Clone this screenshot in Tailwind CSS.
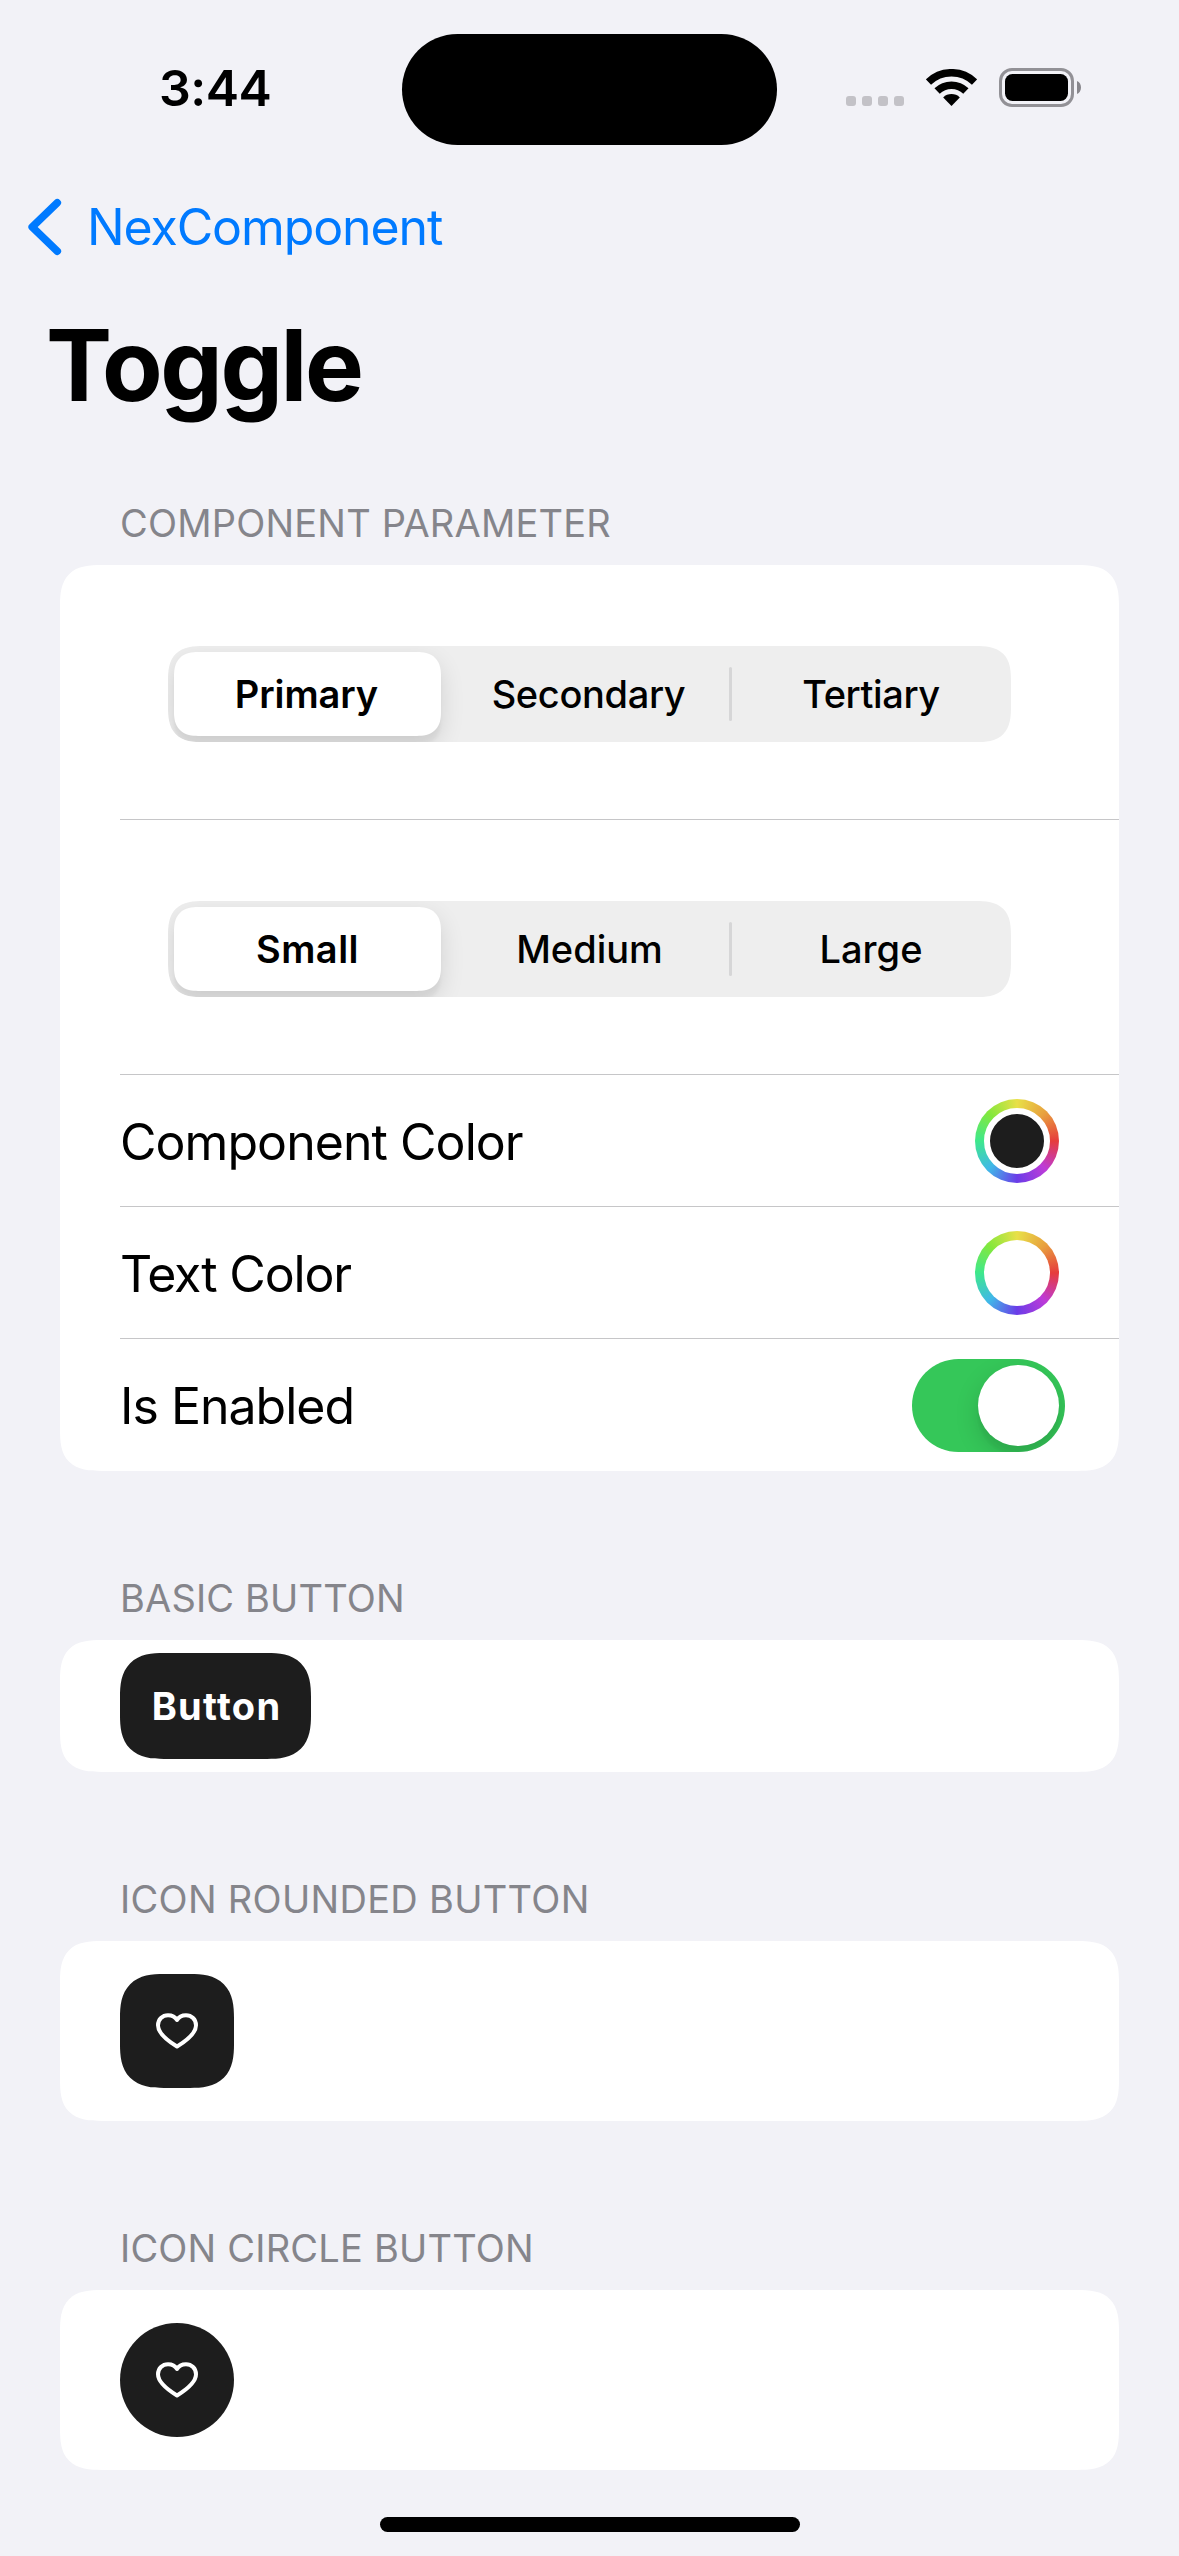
<!DOCTYPE html>
<html lang="en">
<head>
<meta charset="utf-8">
<title>Toggle</title>
<script src="https://cdn.jsdelivr.net/npm/@tailwindcss/browser@4"></script>
</head>
<body class="relative flex h-[2556px] w-[1179px] flex-col overflow-hidden bg-[#f2f2f7] font-[Inter,sans-serif] text-black">

  <!-- Status bar -->
  <header class="flex h-[161px] items-start">
    <div class="w-[402px] pt-[64px] pl-[159px] text-[50px] leading-[48px] font-semibold tracking-[-0.5px]">3:44</div>
    <div class="mt-[33.5px] h-[111px] w-[375px] rounded-full bg-black"></div>
    <div class="flex pl-[69px]">
      <div class="mt-[96px] flex gap-1.5">
        <span class="size-[10px] rounded-[3px] bg-[#c3c2c7]"></span>
        <span class="size-[10px] rounded-[3px] bg-[#c3c2c7]"></span>
        <span class="size-[10px] rounded-[3px] bg-[#c3c2c7]"></span>
        <span class="size-[10px] rounded-[3px] bg-[#c3c2c7]"></span>
      </div>
      <svg class="mt-[69px] ml-[22px] h-[37px] w-[51px]" viewBox="0 0 51 37" fill="none">
        <path d="M2.4 13.1A33.25 33.25 0 0 1 48.600 13.1M11.1 22.1A20.75 20.75 0 0 1 39.900 22.1" stroke="#000" stroke-width="7.600"/>
        <path d="M25.500 37L17.200 28.400C21.600 24 29.400 24 33.800 28.400Z" fill="#000"/>
      </svg>
      <svg class="mt-[68px] ml-[22px] h-[39px] w-[83px]" viewBox="0 0 83 39" fill="none">
        <rect x="1.5" y="1.5" width="72" height="36" rx="11.5" stroke="#929196" stroke-width="3"/>
        <rect x="6" y="6" width="63" height="27" rx="7.5" fill="#000"/>
        <path d="M78 13C80.600 14.200 82 16.500 82 19.500C82 22.500 80.600 24.800 78 26Z" fill="#88878c"/>
      </svg>
    </div>
  </header>

  <!-- Navigation bar -->
  <nav class="flex h-[132px] items-center pl-[27px] text-[#007aff]">
    <svg class="h-[58px] w-[35px]" viewBox="0 0 35 58" fill="none" stroke="currentColor" stroke-width="7.600" stroke-linecap="round" stroke-linejoin="round"><path d="M30.300 4.800L5.200 29L30.300 53.200"/></svg>
    <span class="ml-[25px] text-[50px] leading-[60px] tracking-[-1.1px]">NexComponent</span>
  </nav>

  <h1 class="h-[206px] pl-[46px] text-[99px] leading-[144px] font-bold tracking-[-2.4px]">Toggle</h1>

  <main class="flex flex-col gap-[103px] px-[60px]">
    <section>
      <h2 class="h-[66px] pl-[60px] text-[38px] leading-[48px] tracking-[0.2px] text-[#85858b]">COMPONENT PARAMETER</h2>
      <div class="rounded-[42px] bg-white pl-[60px] [corner-shape:superellipse(1.5)]">
        <div class="h-[255px] border-b border-[#c6c6c8] pt-[81px] pl-[48px]">
          <div class="flex h-[96px] w-[843px] items-center overflow-hidden rounded-[36px] bg-[#eeeeee] p-1.5 text-center text-[38px] leading-[84px] font-medium [corner-shape:superellipse(1.5)]">
            <div class="h-[84px] w-[267px] rounded-[24px] bg-white pr-[2px] font-semibold tracking-[-0.1px] shadow-[0_9px_24px_rgba(0,0,0,0.12),0_9px_3px_rgba(0,0,0,0.04)] [corner-shape:superellipse(1.3)]">Primary</div>
            <div class="w-[288px] pl-[7px] tracking-[-0.35px]">Secondary</div>
            <div class="h-[54px] w-[3px] rounded-full bg-[#d6d6d7]"></div>
            <div class="w-[273px] pl-[5px] tracking-[-0.4px]">Tertiary</div>
          </div>
        </div>
        <div class="h-[255px] border-b border-[#c6c6c8] pt-[81px] pl-[48px]">
          <div class="flex h-[96px] w-[843px] items-center overflow-hidden rounded-[36px] bg-[#eeeeee] p-1.5 text-center text-[38px] leading-[84px] font-medium [corner-shape:superellipse(1.5)]">
            <div class="h-[84px] w-[267px] rounded-[24px] bg-white font-semibold tracking-[0.5px] shadow-[0_9px_24px_rgba(0,0,0,0.12),0_9px_3px_rgba(0,0,0,0.04)] [corner-shape:superellipse(1.3)]">Small</div>
            <div class="w-[288px] pl-[9px] tracking-[0px]">Medium</div>
            <div class="h-[54px] w-[3px] rounded-full bg-[#d6d6d7]"></div>
            <div class="w-[273px] pl-[5px]">Large</div>
          </div>
        </div>
        <div class="flex h-[132px] items-center justify-between border-b border-[#c6c6c8] pr-[60px]">
          <span class="pt-[2px] text-[50px] leading-[60px] tracking-[-0.95px]">Component Color</span>
          <div class="flex size-[84px] items-center justify-center rounded-full bg-[conic-gradient(#e8e048,#e8a03e_45deg,#e63c3c_90deg,#bd3bd8_135deg,#6a3ce8_180deg,#40b8e8_225deg,#3ee88c_270deg,#84e83c_315deg,#e8e048)]">
            <div class="size-[66px] rounded-full border-[6px] border-white bg-[#1d1d1d]"></div>
          </div>
        </div>
        <div class="flex h-[132px] items-center justify-between border-b border-[#c6c6c8] pr-[60px]">
          <span class="pt-[2px] text-[50px] leading-[60px] tracking-[-1.15px]">Text Color</span>
          <div class="flex size-[84px] items-center justify-center rounded-full bg-[conic-gradient(#e8e048,#e8a03e_45deg,#e63c3c_90deg,#bd3bd8_135deg,#6a3ce8_180deg,#40b8e8_225deg,#3ee88c_270deg,#84e83c_315deg,#e8e048)]">
            <div class="size-[66px] rounded-full bg-white"></div>
          </div>
        </div>
        <div class="flex h-[132px] items-center justify-between pr-[54px]">
          <span class="pt-[2px] text-[50px] leading-[60px] tracking-[-1px]">Is Enabled</span>
          <div class="flex h-[93px] w-[153px] justify-end overflow-hidden rounded-full bg-[#35c759] p-1.5">
            <div class="size-[81px] rounded-full bg-white shadow-[0_9px_24px_rgba(0,0,0,0.15),0_9px_3px_rgba(0,0,0,0.04)]"></div>
          </div>
        </div>
      </div>
    </section>

    <section>
      <h2 class="h-[66px] pl-[60px] text-[38px] leading-[48px] tracking-[0.15px] text-[#85858b]">BASIC BUTTON</h2>
      <div class="flex h-[132px] items-center rounded-[42px] bg-white pl-[60px] [corner-shape:superellipse(1.5)]">
        <button class="h-[106px] w-[191px] rounded-[44px] bg-[#1d1d1d] pl-[2px] text-[38px] leading-[106px] font-bold tracking-[1.3px] text-white [corner-shape:superellipse(1.4)]">Button</button>
      </div>
    </section>

    <section>
      <h2 class="h-[66px] pl-[60px] text-[38px] leading-[48px] tracking-[0.3px] text-[#85858b]">ICON ROUNDED BUTTON</h2>
      <div class="flex h-[180px] items-center rounded-[42px] bg-white pl-[60px] [corner-shape:superellipse(1.5)]">
        <button class="flex size-[114px] items-center justify-center rounded-[44px] bg-[#1d1d1d] [corner-shape:superellipse(1.4)]">
          <svg class="h-[36px] w-[42px]" viewBox="0 0 42 36" fill="none" stroke="#fff" stroke-width="4" stroke-linejoin="round"><path d="M21 33.500C12 28 2 20.500 2 12.300C2 6.300 6.500 2.200 12 2.200C16 2.200 19.300 4 21 7C22.700 4 26 2.200 30 2.200C35.500 2.200 40 6.300 40 12.300C40 20.500 30 28 21 33.500Z"/></svg>
        </button>
      </div>
    </section>

    <section>
      <h2 class="h-[66px] pl-[60px] text-[38px] leading-[48px] tracking-[0.2px] text-[#85858b]">ICON CIRCLE BUTTON</h2>
      <div class="flex h-[180px] items-center rounded-[42px] bg-white pl-[60px] [corner-shape:superellipse(1.5)]">
        <button class="flex size-[114px] items-center justify-center rounded-full bg-[#1d1d1d]">
          <svg class="h-[36px] w-[42px]" viewBox="0 0 42 36" fill="none" stroke="#fff" stroke-width="4" stroke-linejoin="round"><path d="M21 33.500C12 28 2 20.500 2 12.300C2 6.300 6.500 2.200 12 2.200C16 2.200 19.300 4 21 7C22.700 4 26 2.200 30 2.200C35.500 2.200 40 6.300 40 12.300C40 20.500 30 28 21 33.500Z"/></svg>
        </button>
      </div>
    </section>
  </main>

  <!-- Home indicator -->
  <div class="mx-auto mt-[47px] h-[15px] w-[420px] shrink-0 rounded-full bg-black"></div>
</body>
</html>
